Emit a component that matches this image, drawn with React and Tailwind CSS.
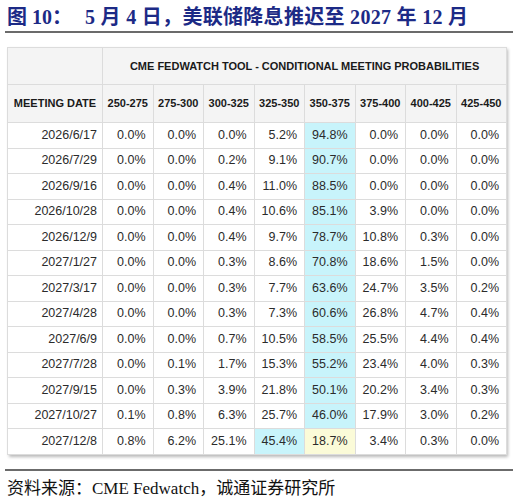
const ranges = ['250-275', '275-300', '300-325', '325-350', '350-375', '375-400', '400-425', '425-450']

const rows = [
  ['2026/6/17', '0.0', '0.0', '0.0', '5.2', '94.8', '0.0', '0.0', '0.0'],
  ['2026/7/29', '0.0', '0.0', '0.2', '9.1', '90.7', '0.0', '0.0', '0.0'],
  ['2026/9/16', '0.0', '0.0', '0.4', '11.0', '88.5', '0.0', '0.0', '0.0'],
  ['2026/10/28', '0.0', '0.0', '0.4', '10.6', '85.1', '3.9', '0.0', '0.0'],
  ['2026/12/9', '0.0', '0.0', '0.4', '9.7', '78.7', '10.8', '0.3', '0.0'],
  ['2027/1/27', '0.0', '0.0', '0.3', '8.6', '70.8', '18.6', '1.5', '0.0'],
  ['2027/3/17', '0.0', '0.0', '0.3', '7.7', '63.6', '24.7', '3.5', '0.2'],
  ['2027/4/28', '0.0', '0.0', '0.3', '7.3', '60.6', '26.8', '4.7', '0.4'],
  ['2027/6/9', '0.0', '0.0', '0.7', '10.5', '58.5', '25.5', '4.4', '0.4'],
  ['2027/7/28', '0.0', '0.1', '1.7', '15.3', '55.2', '23.4', '4.0', '0.3'],
  ['2027/9/15', '0.0', '0.3', '3.9', '21.8', '50.1', '20.2', '3.4', '0.3'],
  ['2027/10/27', '0.1', '0.8', '6.3', '25.7', '46.0', '17.9', '3.0', '0.2'],
  ['2027/12/8', '0.8', '6.2', '25.1', '45.4', '18.7', '3.4', '0.3', '0.0'],
]

// which cell gets a tint: cyan = current target, yellow = the last row's shifted one
function cellBg(rowIdx, colIdx) {
  const last = rowIdx === rows.length - 1
  if (last) {
    if (colIdx === 3) return 'bg-[#c8f4fb]'
    if (colIdx === 4) return 'bg-[#fbfbd8]'
    return 'bg-white'
  }
  return colIdx === 4 ? 'bg-[#c8f4fb]' : 'bg-white'
}

export default function App() {
  return (
    <div className="w-[518px] h-[500px] bg-white overflow-hidden font-['Liberation_Sans',Arial,sans-serif]">
      {/* title */}
      <div className="h-[31px] pl-[7px] pt-[5px] text-[20px] leading-[24px] font-bold text-[#1c2a86] whitespace-pre font-['Liberation_Serif','Noto_Sans_CJK_SC',serif]">
        图 10：<span className="ml-[13px] tracking-[0.3px]">5 月 4 日，美联储降息推迟至 2027 年 12 月</span>
      </div>
      <div className="mx-[5px] h-[2px] bg-[#6b6b6b]" />

      {/* table */}
      <div className="mt-[14px] ml-[7px] w-[499px] shadow-[2px_2px_3px_rgba(0,0,0,0.28)]">
        <table className="w-[499px] table-fixed border-collapse text-[#2b2b2b]">
          <colgroup>
            <col className="w-[95px]" />
            {ranges.map((r) => (
              <col key={r} className="w-[50.5px]" />
            ))}
          </colgroup>
          <thead>
            <tr className="h-[37px] bg-[#f4f4f4]">
              <th className="border border-[#dcdcdc]" />
              <th colSpan={8} className="border border-[#dcdcdc] text-[11px] font-bold text-[#1a1a1a] text-center">
                CME FEDWATCH TOOL - CONDITIONAL MEETING PROBABILITIES
              </th>
            </tr>
            <tr className="h-[38px] bg-[#f4f4f4]">
              <th className="border border-[#dcdcdc] text-[11px] font-bold text-[#1a1a1a] text-center whitespace-nowrap">
                MEETING DATE
              </th>
              {ranges.map((r) => (
                <th key={r} className="border border-[#dcdcdc] text-[11px] font-bold text-[#1a1a1a] text-center whitespace-nowrap px-0">
                  {r}
                </th>
              ))}
            </tr>
          </thead>
          <tbody>
            {rows.map((row, i) => (
              <tr key={row[0]} className="h-[25.5px]">
                <td className="border border-[#dcdcdc] bg-white text-right pr-[5px] text-[12.5px] whitespace-nowrap">
                  {row[0]}
                </td>
                {row.slice(1).map((v, j) => (
                  <td
                    key={j}
                    className={`border border-[#dcdcdc] text-right pr-[7px] text-[12.5px] whitespace-nowrap ${cellBg(i, j)}`}
                  >
                    {v}%
                  </td>
                ))}
              </tr>
            ))}
          </tbody>
        </table>
      </div>

      {/* source */}
      <div className="mt-[14px] mx-[5px] h-[2px] bg-[#6b6b6b]" />
      <div className="pl-[7px] pt-[7px] text-[17px] leading-[22px] text-[#111] font-['Liberation_Serif','Noto_Sans_CJK_SC',serif]">
        资料来源：CME Fedwatch，诚通证券研究所
      </div>
    </div>
  )
}
